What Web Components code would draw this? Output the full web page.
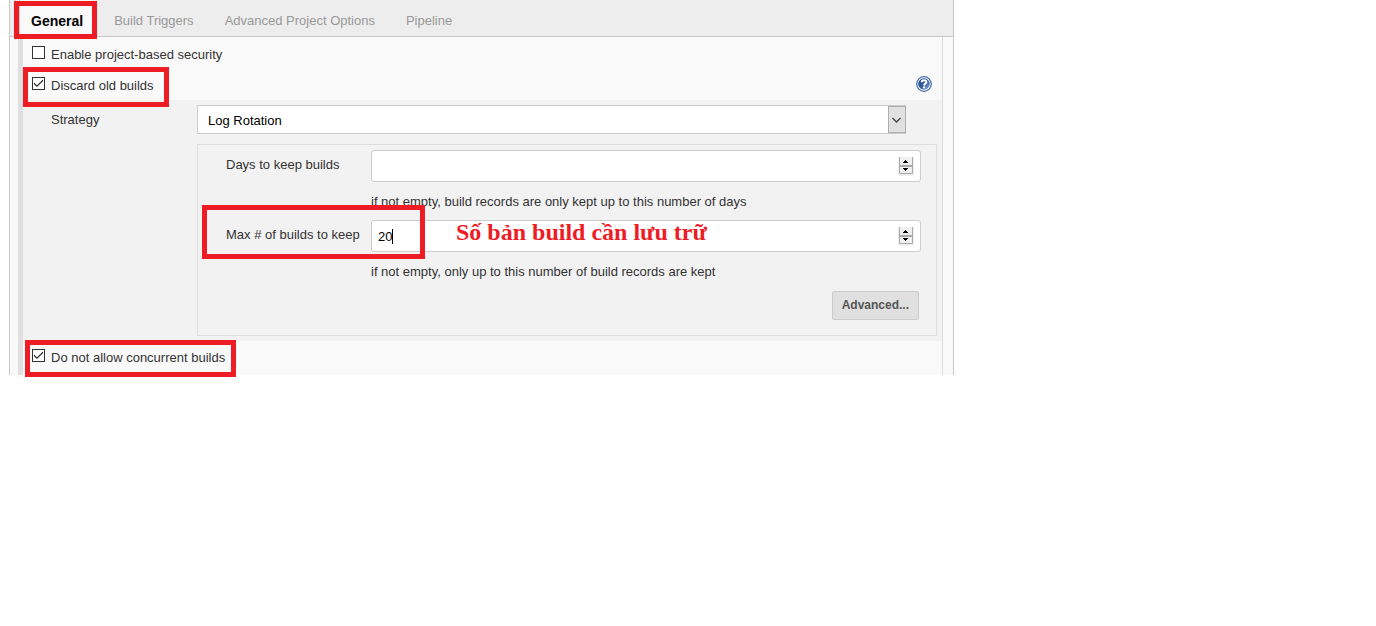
<!DOCTYPE html>
<html lang="en">
<head>
<meta charset="utf-8">
<title>Job configuration</title>
<style>
  body { margin: 0; min-height: 100vh; background: #fff; color: #333; font: 13px/16px "Liberation Sans", Arial, sans-serif; }
</style>
</head>
<body>
<job-config></job-config>

<script>
const define = (name, html, setup) => {
  const template = document.createElement('template');
  template.innerHTML = html;
  customElements.define(name, class extends HTMLElement {
    constructor() {
      super();
      this.attachShadow({ mode: 'open' }).append(template.content.cloneNode(true));
    }
    connectedCallback() { if (setup) setup(this, this.shadowRoot); }
  });
};

/* Red outline laid over the item it points out */
define('mark-frame', `
  <style>
    :host { position: absolute; z-index: 2; box-sizing: border-box; border: 5px solid #ee1c25; pointer-events: none; }
  </style>`);

define('help-button', `
  <style>
    :host { display: block; }
    button { display: block; width: 16px; height: 16px; padding: 0; border: 0; background: none; }
    svg { display: block; }
  </style>
  <button type="button" aria-label="Help">
    <svg width="16" height="16" viewBox="0 0 16 16">
      <defs><linearGradient id="g" x1="0" y1="0" x2="1" y2="1">
        <stop offset="0" stop-color="#1c4587"/><stop offset=".55" stop-color="#34609f"/><stop offset="1" stop-color="#8fb0dc"/>
      </linearGradient></defs>
      <circle cx="8" cy="8" r="7.3" fill="#fff" stroke="#4a72ad" stroke-width="1.3"/>
      <circle cx="8" cy="8" r="5.8" fill="url(#g)"/>
      <path d="M5.7 6.3C5.7 3.5 10.4 3.5 10.4 6.1C10.4 7.7 8.1 7.5 8.1 9.4" fill="none" stroke="#fff" stroke-width="2"/>
      <rect x="7" y="10.4" width="2.2" height="2" fill="#fff"/>
    </svg>
  </button>`);

define('config-tabs', `
  <style>
    :host { display: block; background: #ededed; border-bottom: 1px solid #c8c8c8; }
    nav { display: flex; gap: 10px; height: 36px; padding-left: 10px; }
    .tab { position: relative; display: flex; }
    button { padding: 5px 10px 0 11px; border: 0; background: none; color: #999; font: inherit; }
    button.active { background: #f9f9f9; color: #000; font-size: 14px; font-weight: bold; box-shadow: -1px 0 #ccc; }
    mark-frame { inset: 1px -4px -3px -6px; }
  </style>
  <nav>
    <span class="tab"><button type="button" class="active">General</button><mark-frame></mark-frame></span>
    <span class="tab"><button type="button">Build Triggers</button></span>
    <span class="tab"><button type="button">Advanced Project Options</button></span>
    <span class="tab"><button type="button">Pipeline</button></span>
  </nav>`);

define('check-row', `
  <style>
    :host { display: flex; justify-content: space-between; position: relative; box-sizing: border-box; height: 31px; padding: 7px 10px 0 9px; }
    label { display: flex; gap: 6px; height: 18px; }
    input { appearance: none; box-sizing: border-box; width: 13px; height: 13px; margin: 1px 0 0; border: 1px solid #333; background: #fff; }
    input:checked { background: #fff url('data:image/svg+xml,<svg xmlns="http://www.w3.org/2000/svg" viewBox="0 0 11 11"><path d="M1 5.2L4 8.2L10 2.2" fill="none" stroke="%23333" stroke-width="1.3"/></svg>'); }
    span { padding-top: 2px; }
  </style>
  <label><input type="checkbox"><span><slot></slot></span></label>
  <slot name="extra"></slot>`,
  (host, root) => { root.querySelector('input').checked = host.hasAttribute('checked'); });

define('strategy-select', `
  <style>
    :host { display: block; position: relative; margin-right: 31px; }
    select { appearance: none; display: block; box-sizing: border-box; width: 100%; height: 29px; padding: 2px 28px 0 10px; border: 1px solid #ccc; border-radius: 0; background: #fff; color: #000; font: inherit; }
    svg { position: absolute; top: 1px; right: 0; pointer-events: none; }
  </style>
  <select aria-label="Strategy"><option>Log Rotation</option></select>
  <svg width="18" height="27" viewBox="0 0 18 27">
    <rect x=".5" y=".5" width="17" height="26" fill="#e1e1e1" stroke="#adadad"/>
    <path d="M4.5 12L8.5 16L12.5 12" fill="none" stroke="#444" stroke-width="1.3"/>
  </svg>`);

define('number-row', `
  <style>
    :host { display: grid; grid-template-columns: 145px 1fr; position: relative; height: 70px; }
    label { padding-top: 7px; white-space: nowrap; }
    .field { position: relative; }
    input { appearance: textfield; display: block; box-sizing: border-box; width: 100%; height: 32px; padding: 1px 28px 0 6px; border: 1px solid #ccc; border-radius: 3px; background: #fff; color: #000; font: inherit; }
    input::-webkit-inner-spin-button { appearance: none; }
    svg { position: absolute; top: 7px; right: 7px; }
    p { margin: 12px 0 0; }
  </style>
  <label for="n"></label>
  <div>
    <div class="field">
      <input id="n" type="number">
      <svg width="16" height="19" viewBox="0 0 16 19">
        <rect width="16" height="19" fill="#f0f0f0"/>
        <path d="M1.5 0V16.5H14.5V0" fill="none" stroke="#a9a9a9"/>
        <path d="M1 9H15" stroke="#a9a9a9" stroke-width="2"/>
        <path d="M5 6h5v-1h-1v-1h-1v-1h-1v1h-1v1h-1zM5 11h5v1h-1v1h-1v1h-1v-1h-1v-1h-1z" fill="#000"/>
      </svg>
      <slot></slot>
    </div>
    <p></p>
  </div>
  <slot name="mark"></slot>`,
  (host, root) => {
    root.querySelector('label').textContent = host.getAttribute('label');
    root.querySelector('p').textContent = host.getAttribute('hint');
    root.querySelector('input').value = host.getAttribute('value') || '';
  });

define('log-rotation', `
  <style>
    :host { display: block; box-sizing: border-box; border: 1px solid #ddd; padding: 5px 15px 15px 28px; }
    .caret { position: absolute; left: 21px; top: 9px; width: 1px; height: 15px; background: #000; }
    .note { position: absolute; left: 85px; top: -2px; white-space: nowrap; color: #ee1c25; font: bold 24px/28px "Liberation Serif", "Times New Roman", serif; }
    .range { inset: -15px auto auto -24px; width: 223px; height: 54px; }
    footer { display: flex; justify-content: flex-end; padding: 1px 2px 0 0; }
    button { box-sizing: border-box; height: 29px; padding: 0 9px 2px; border: 1px solid #ccc; border-radius: 2px; background: #e0e0e0; color: #555; font: bold 12px/16px "Liberation Sans", Arial, sans-serif; }
  </style>
  <number-row label="Days to keep builds" hint="if not empty, build records are only kept up to this number of days"></number-row>
  <number-row label="Max # of builds to keep" value="20" hint="if not empty, only up to this number of build records are kept">
    <i class="caret"></i>
    <span class="note" lang="vi">Số bản build cần lưu trữ</span>
    <mark-frame slot="mark" class="range"></mark-frame>
  </number-row>
  <footer><button type="button">Advanced...</button></footer>`);

define('job-config', `
  <style>
    :host { display: block; box-sizing: border-box; max-width: 945px; margin-left: 9px; border: solid #c8c8c8; border-width: 0 1px; background: #f9f9f9; }
    main { margin: 0 10px 0 8px; padding-top: 1px; border-left: 5px solid #e0e0e0; border-right: 1px solid #ddd; }
    .strategy { display: grid; grid-template-columns: 146px 1fr; padding: 5px 5px 5px 28px; background: #f2f2f2; }
    .strategy > span { padding-top: 7px; }
    .options { display: grid; gap: 10px; }
    .discard { inset: -2px auto auto 0; width: 146px; height: 40px; }
    .concurrent { inset: -1px auto auto 2px; width: 211px; height: 37px; }
    .last { height: 34px; }
  </style>
  <config-tabs></config-tabs>
  <main>
    <check-row>Enable project-based security</check-row>
    <check-row checked>Discard old builds<help-button slot="extra"></help-button><mark-frame slot="extra" class="discard"></mark-frame></check-row>
    <section class="strategy">
      <span>Strategy</span>
      <div class="options">
        <strategy-select></strategy-select>
        <log-rotation></log-rotation>
      </div>
    </section>
    <check-row class="last" checked>Do not allow concurrent builds<mark-frame slot="extra" class="concurrent"></mark-frame></check-row>
  </main>`);
</script>
</body>
</html>
